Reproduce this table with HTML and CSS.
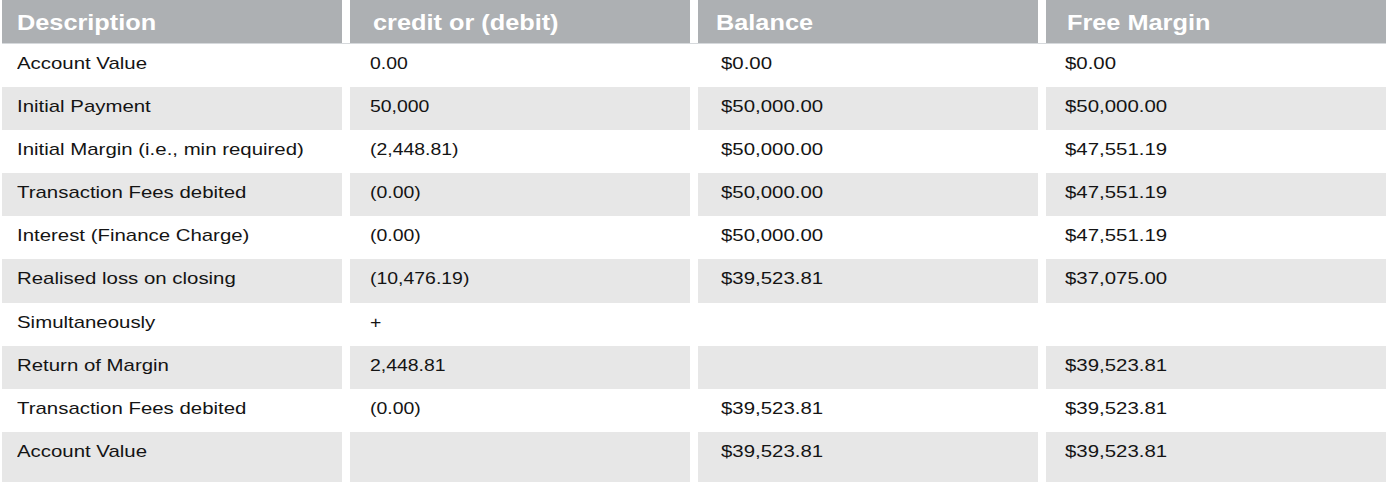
FILE: index.html
```html
<!DOCTYPE html>
<html>
<head>
<meta charset="utf-8">
<link rel="stylesheet" href="styles.css">
</head>
<body>
<div class="table">
  <div class="row head">
    <div class="cell"><span class="t">Description</span></div>
    <div class="cell"><span class="t">credit or (debit)</span></div>
    <div class="cell"><span class="t">Balance</span></div>
    <div class="cell"><span class="t">Free Margin</span></div>
  </div>
  <div class="row">
    <div class="cell"><span class="t">Account Value</span></div>
    <div class="cell"><span class="t">0.00</span></div>
    <div class="cell"><span class="t">$0.00</span></div>
    <div class="cell"><span class="t">$0.00</span></div>
  </div>
  <div class="row alt">
    <div class="cell"><span class="t">Initial Payment</span></div>
    <div class="cell"><span class="t">50,000</span></div>
    <div class="cell"><span class="t">$50,000.00</span></div>
    <div class="cell"><span class="t">$50,000.00</span></div>
  </div>
  <div class="row">
    <div class="cell"><span class="t">Initial Margin (i.e., min required)</span></div>
    <div class="cell"><span class="t">(2,448.81)</span></div>
    <div class="cell"><span class="t">$50,000.00</span></div>
    <div class="cell"><span class="t">$47,551.19</span></div>
  </div>
  <div class="row alt">
    <div class="cell"><span class="t">Transaction Fees debited</span></div>
    <div class="cell"><span class="t">(0.00)</span></div>
    <div class="cell"><span class="t">$50,000.00</span></div>
    <div class="cell"><span class="t">$47,551.19</span></div>
  </div>
  <div class="row">
    <div class="cell"><span class="t">Interest (Finance Charge)</span></div>
    <div class="cell"><span class="t">(0.00)</span></div>
    <div class="cell"><span class="t">$50,000.00</span></div>
    <div class="cell"><span class="t">$47,551.19</span></div>
  </div>
  <div class="row alt">
    <div class="cell"><span class="t">Realised loss on closing</span></div>
    <div class="cell"><span class="t">(10,476.19)</span></div>
    <div class="cell"><span class="t">$39,523.81</span></div>
    <div class="cell"><span class="t">$37,075.00</span></div>
  </div>
  <div class="row">
    <div class="cell"><span class="t">Simultaneously</span></div>
    <div class="cell"><span class="t">+</span></div>
    <div class="cell"></div>
    <div class="cell"></div>
  </div>
  <div class="row alt">
    <div class="cell"><span class="t">Return of Margin</span></div>
    <div class="cell"><span class="t">2,448.81</span></div>
    <div class="cell"></div>
    <div class="cell"><span class="t">$39,523.81</span></div>
  </div>
  <div class="row">
    <div class="cell"><span class="t">Transaction Fees debited</span></div>
    <div class="cell"><span class="t">(0.00)</span></div>
    <div class="cell"><span class="t">$39,523.81</span></div>
    <div class="cell"><span class="t">$39,523.81</span></div>
  </div>
  <div class="row alt last">
    <div class="cell"><span class="t">Account Value</span></div>
    <div class="cell"></div>
    <div class="cell"><span class="t">$39,523.81</span></div>
    <div class="cell"><span class="t">$39,523.81</span></div>
  </div>
</div>
</body>
</html>
```

FILE: styles.css
```css
html, body {
  margin: 0;
  padding: 0;
  background: #ffffff;
}

body {
  font-family: "Liberation Sans", Arial, sans-serif;
  color: #141414;
  overflow: hidden;
}

.table {
  margin-left: 2px;
  width: 1384px;
  display: flex;
  flex-direction: column;
}

.row {
  display: grid;
  grid-template-columns: 340px 340px 340px 340px;
  column-gap: 8px;
  height: 43.1px;
}

.row.last {
  height: 52px;
}

.cell {
  padding-top: 10px;
  font-size: 16.2px;
  white-space: nowrap;
  box-sizing: border-box;
}

.cell:nth-child(1) { padding-left: 15px; }
.cell:nth-child(2) { padding-left: 20px; }
.cell:nth-child(3) { padding-left: 23px; }
.cell:nth-child(4) { padding-left: 19px; }

.t {
  display: inline-block;
  transform: scaleX(1.26);
  transform-origin: left center;
}

.cell:nth-child(2) .t {
  transform: scaleX(1.2);
}

.alt .cell {
  background: #e7e7e7;
}

.head {
  height: 43px;
  border-bottom: 1px solid #d6d9dc;
  box-sizing: content-box;
}

.head .cell {
  background: #adb0b3;
  color: #ffffff;
  font-weight: bold;
  font-size: 22px;
  padding-top: 10px;
}

.head .cell:nth-child(2) { padding-left: 23px; }
.head .cell:nth-child(3) { padding-left: 18px; }
.head .cell:nth-child(4) { padding-left: 21px; }

.head .cell .t {
  transform: scaleX(1.15);
}
```
